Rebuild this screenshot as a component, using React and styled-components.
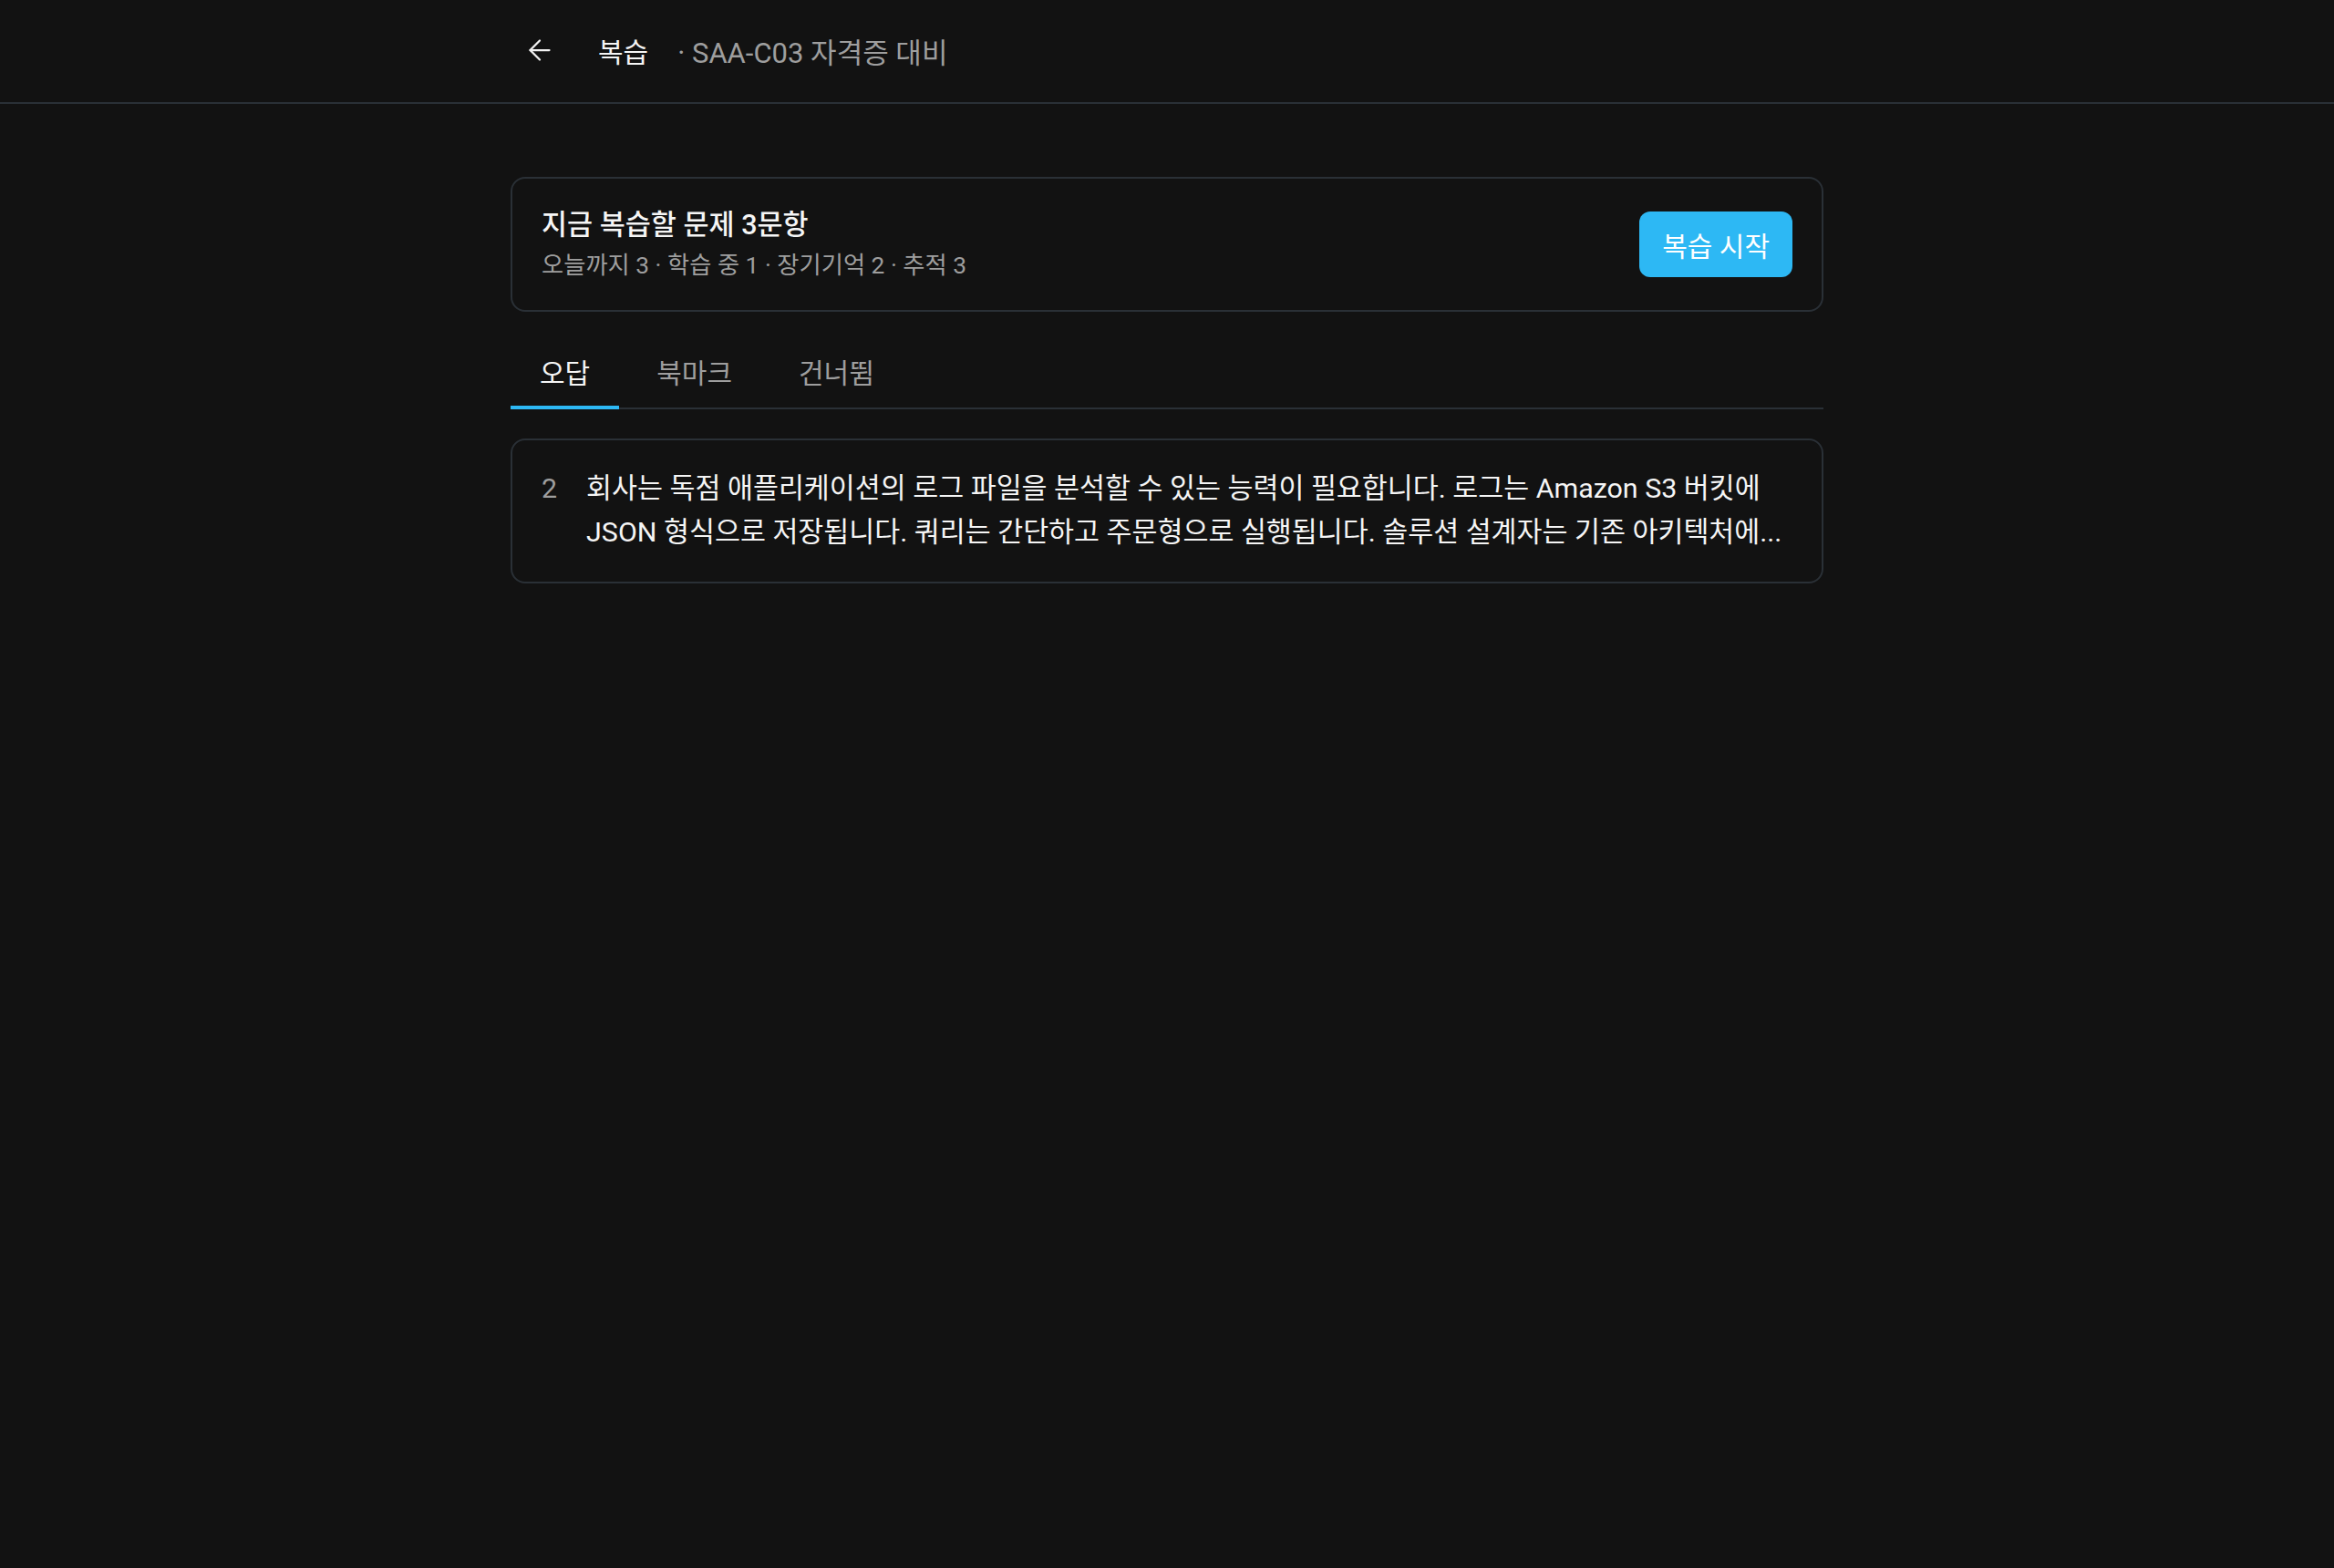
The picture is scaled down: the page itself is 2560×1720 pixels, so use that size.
import React from "react";
import styled, { createGlobalStyle } from "styled-components";
import { ArrowLeft } from "lucide-react";

const GlobalStyle = createGlobalStyle`
  html, body {
    margin: 0;
    padding: 0;
    background: #121212;
  }
  body {
    min-height: 1720px;
    font-family: Roboto, "Noto Sans CJK KR", sans-serif;
    color: #f2f2f2;
  }
  * { box-sizing: border-box; }
`;

const Header = styled.header`
  height: 114px;
  padding-bottom: 2px;
  border-bottom: 2px solid #2a3036;
`;

const HeaderInner = styled.div`
  max-width: 1440px;
  height: 100%;
  margin: 0 auto;
  display: flex;
  align-items: center;
  gap: 32px;
`;

const BackButton = styled.button`
  width: 64px;
  height: 64px;
  padding: 0;
  border: none;
  background: transparent;
  color: #f2f2f2;
  display: flex;
  align-items: center;
  justify-content: center;
  cursor: pointer;
`;

const PageTitle = styled.h1`
  margin: 0;
  font-size: 30px;
  font-weight: 400;
  color: #f5f5f5;
`;

const PageSub = styled.span`
  font-size: 31px;
  color: #9e9e9e;
`;

const Main = styled.main`
  max-width: 1440px;
  margin: 0 auto;
  padding-top: 80px;
`;

const Card = styled.section`
  border: 2px solid #2a3036;
  border-radius: 16px;
  padding: ${(p) => p.$pad || "30px 32px"};
`;

const SummaryRow = styled.div`
  display: flex;
  align-items: center;
  justify-content: space-between;
`;

const SummaryTitle = styled.h2`
  margin: 0;
  font-size: 30.5px;
  line-height: 42px;
  font-weight: 500;
  color: #f5f5f5;
`;

const SummaryMeta = styled.p`
  margin: 4px 0 0;
  font-size: 26.3px;
  line-height: 38px;
  color: #9e9e9e;
`;

const StartButton = styled.button`
  height: 72px;
  padding: 0 25px;
  border: none;
  border-radius: 12px;
  background: #2db8f4;
  color: #ffffff;
  font-family: inherit;
  font-size: 30px;
  cursor: pointer;
`;

const Tabs = styled.nav`
  margin-top: 29px;
  display: flex;
  gap: 9px;
  border-bottom: 2px solid #2a3036;
`;

const Tab = styled.button`
  margin-bottom: -2px;
  padding: 16px 32px 13px;
  border: none;
  border-bottom: 4px solid ${(p) => (p.$active ? "#2db8f4" : "transparent")};
  background: transparent;
  color: ${(p) => (p.$active ? "#f5f5f5" : "#9e9e9e")};
  font-family: inherit;
  font-size: 30px;
  line-height: 45px;
  cursor: pointer;
`;

const List = styled.div`
  margin-top: 32px;
  display: flex;
  flex-direction: column;
  gap: 24px;
`;

const QuestionRow = styled.div`
  display: flex;
  gap: 32px;
  font-size: 30.4px;
  line-height: 48px;
`;

const QuestionNo = styled.span`
  flex: 0 0 auto;
  color: #9e9e9e;
`;

const QuestionText = styled.p`
  margin: 0;
  color: #f5f5f5;
  display: -webkit-box;
  -webkit-line-clamp: 2;
  -webkit-box-orient: vertical;
  overflow: hidden;
`;

const tabs = ["오답", "북마크", "건너뜀"];

const questions = [
  {
    no: 2,
    text:
      "회사는 독점 애플리케이션의 로그 파일을 분석할 수 있는 능력이 필요합니다. 로그는 Amazon S3 버킷에 JSON 형식으로 저장됩니다. 쿼리는 간단하고 주문형으로 실행됩니다. 솔루션 설계자는 기존 아키텍처에...",
  },
];

export default function App() {
  return (
    <>
      <GlobalStyle />
      <Header>
        <HeaderInner>
          <BackButton aria-label="뒤로">
            <ArrowLeft size={36} strokeWidth={1.5} />
          </BackButton>
          <PageTitle>복습</PageTitle>
          <PageSub>· SAA-C03 자격증 대비</PageSub>
        </HeaderInner>
      </Header>
      <Main>
        <Card>
          <SummaryRow>
            <div>
              <SummaryTitle>지금 복습할 문제 3문항</SummaryTitle>
              <SummaryMeta>오늘까지 3 · 학습 중 1 · 장기기억 2 · 추적 3</SummaryMeta>
            </div>
            <StartButton>복습 시작</StartButton>
          </SummaryRow>
        </Card>

        <Tabs>
          {tabs.map((t, i) => (
            <Tab key={t} $active={i === 0}>
              {t}
            </Tab>
          ))}
        </Tabs>

        <List>
          {questions.map((q) => (
            <Card key={q.no} $pad="29px 32px 30px">
              <QuestionRow>
                <QuestionNo>{q.no}</QuestionNo>
                <QuestionText>{q.text}</QuestionText>
              </QuestionRow>
            </Card>
          ))}
        </List>
      </Main>
    </>
  );
}
